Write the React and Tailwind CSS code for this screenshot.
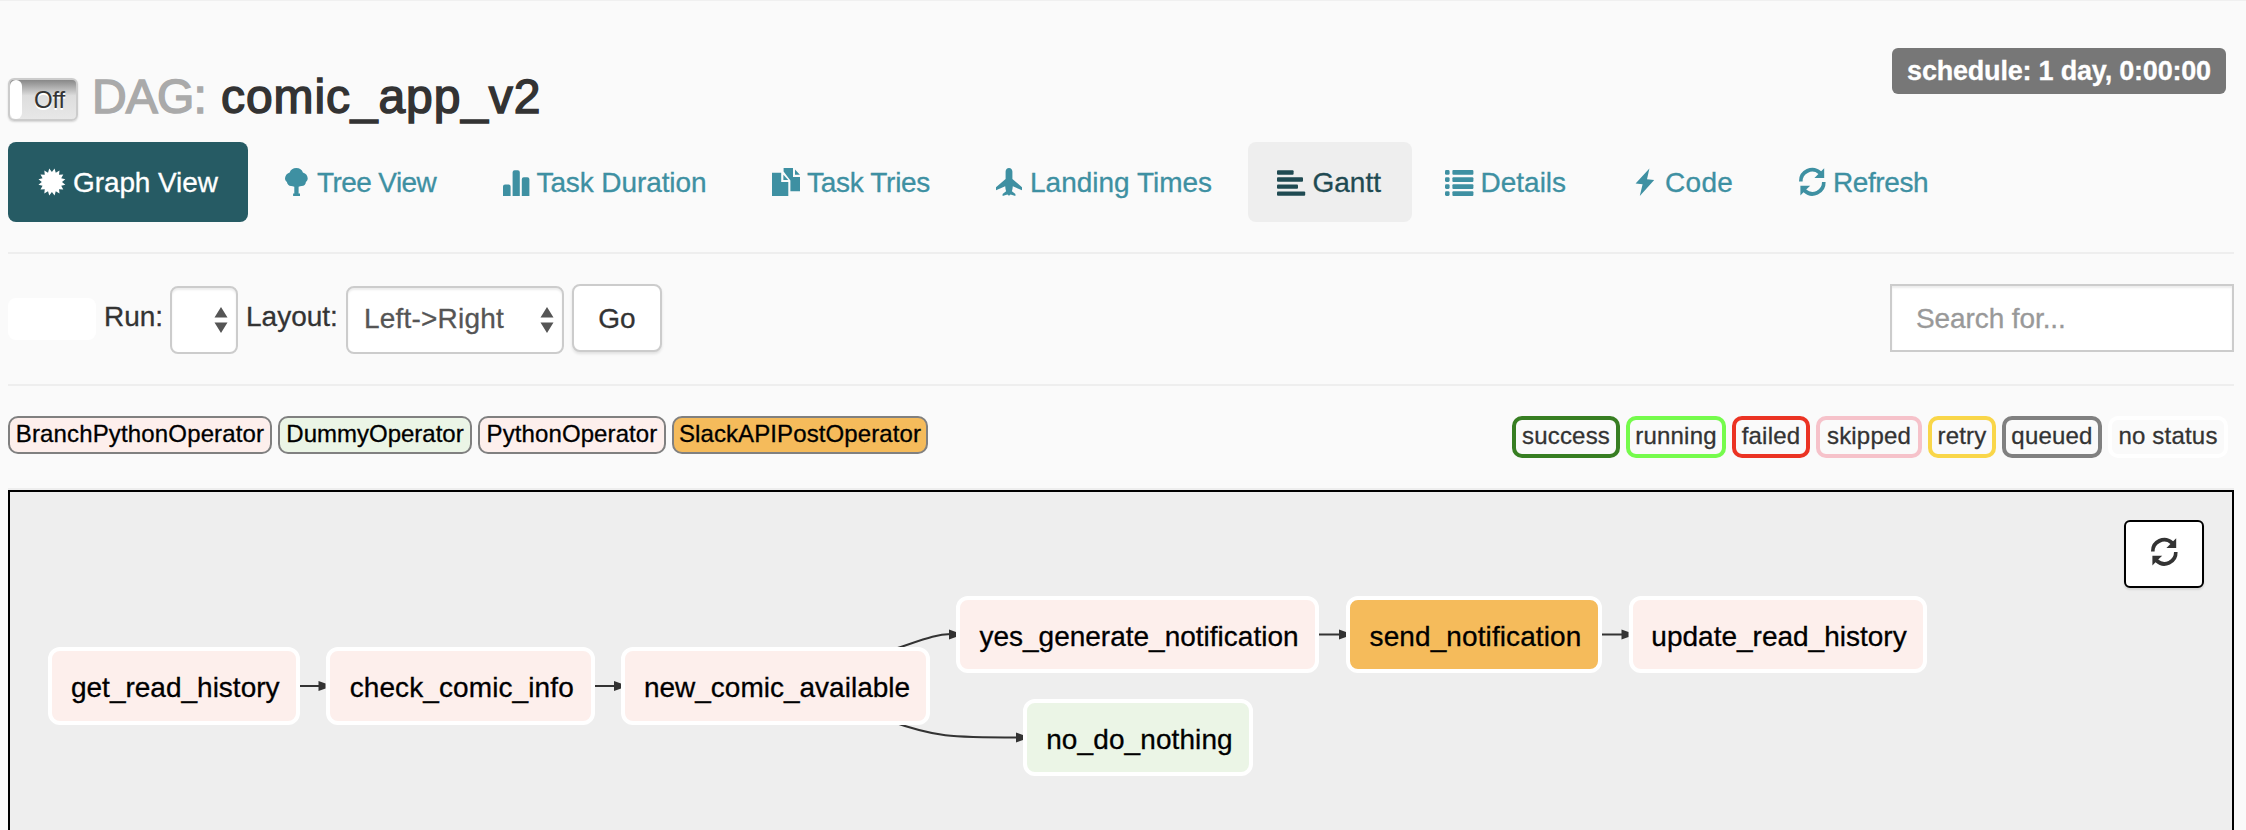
import React from "react";

/* ---------- icons (28px em box) ---------- */
function Icon({ children }) {
  return (
    <svg viewBox="0 0 28 28" className="h-7 w-7 shrink-0 overflow-visible fill-current">
      {children}
    </svg>
  );
}

const burst = Array.from({ length: 32 }, (_, i) => {
  const r = i % 2 === 0 ? 13.7 : 10.1;
  const a = ((i * 11.25 + 11.25) * Math.PI) / 180;
  return `${(13.9 + r * Math.sin(a)).toFixed(2)},${(14 - r * Math.cos(a)).toFixed(2)}`;
}).join(" ");

const CertificateIcon = () => (
  <Icon>
    <polygon points={burst} />
  </Icon>
);

const TreeIcon = () => (
  <Icon>
    <path d="M14.3 0C17.6 0 20 1.7 20.9 4.4C24 5.2 25.8 7.8 25.7 10.6C25.7 12.2 24.9 13.2 23.9 13.9C23.7 16.4 22 17.9 19.8 17.9C18.6 17.9 17.6 18.3 16.6 18.7V25.6H18V28H11.1V25.6H12.3V18.7C11.2 18.3 10.2 17.9 9 17.9C6.8 17.9 5.2 16.4 4.9 14C3.8 13.2 3 12.1 3 10.5C3 7.8 4.8 5.3 7.7 4.4C8.6 1.7 11.1 0 14.3 0Z" />
  </Icon>
);

const StatsIcon = () => (
  <Icon>
    <path d="M2 28V18.4A2 2 0 0 1 4 16.4H7.6A2 2 0 0 1 9.6 18.4V28ZM11.6 28V4.3A2 2 0 0 1 13.6 2.3H16.8A2 2 0 0 1 18.8 4.3V28ZM20.8 28V11.2A2 2 0 0 1 22.8 9.2H26.4A2 2 0 0 1 28.4 11.2V28Z" />
  </Icon>
);

const DuplicateIcon = () => (
  <Icon>
    <path d="M0 4.7H9.2V13.9H16.3V28H0Z" />
    <path d="M11.6 0H21V8.9H28V23.3H18.4V12.6L11.6 3.4Z" />
    <path d="M11.4 6.8L16.2 12H11.4Z" />
    <path d="M23 1.4L27.9 6.8H23Z" />
  </Icon>
);

const PlaneIcon = () => (
  <Icon>
    <path d="M14 0C16 0 17.4 1.6 17.4 3.6V11L27 19.3V22.3L17.8 18.2C17.7 20 17.3 21.8 16.9 23.2L20.4 26V28L15.6 26.5L14 27.8L12.4 26.5L7.6 28V26L11.1 23.2C10.7 21.8 10.3 20 10.2 18.2L1 22.3V19.3L10.6 11V3.6C10.6 1.6 12 0 14 0Z" />
  </Icon>
);

const AlignLeftIcon = () => (
  <Icon>
    <rect x="0" y="2.3" width="16.6" height="4.4" rx="1" />
    <rect x="0" y="9.3" width="26" height="4.4" rx="1" />
    <rect x="0" y="16.4" width="21" height="4.4" rx="1" />
    <rect x="0" y="23.4" width="28.2" height="4.4" rx="1" />
  </Icon>
);

const ListIcon = () => (
  <Icon>
    {[2.1, 9.2, 16.2, 23.2].map((y) => (
      <React.Fragment key={y}>
        <rect x="0" y={y} width="4.6" height="4.7" rx="1.3" />
        <rect x="7.4" y={y} width="21" height="4.7" rx="1" />
      </React.Fragment>
    ))}
  </Icon>
);

const FlashIcon = () => (
  <Icon>
    <path d="M19.4 0.4L5.6 15.6L12.6 16.3L9.8 28L24.2 12L17 11.3Z" />
  </Icon>
);

const RefreshIcon = () => (
  <Icon>
    <path d="M1 13.5A13.2 13.2 0 0 1 23.1 3.3L26.2 0.2V9.9H16.4L20.4 6A9.6 9.6 0 0 0 4.6 13.5Z" />
    <path d="M27.6 14.1A13.2 13.2 0 0 1 5.5 24.3L2.4 27.4V17.7H12.2L8.2 21.6A9.6 9.6 0 0 0 24 14.1Z" />
  </Icon>
);

/* ---------- data ---------- */
const tabs = [
  { label: "Graph View", icon: CertificateIcon, cls: "w-[240px] bg-[#265b64] text-white tracking-[-0.1px]" },
  { label: "Tree View", icon: TreeIcon, cls: "w-[215.5px] text-[#3e90a2] tracking-[-0.6px]" },
  { label: "Task Duration", icon: StatsIcon, cls: "w-[266.5px] text-[#3e90a2] tracking-[-0.1px]" },
  { label: "Task Tries", icon: DuplicateIcon, cls: "w-[219px] text-[#3e90a2] tracking-[-0.3px]" },
  { label: "Landing Times", icon: PlaneIcon, cls: "w-[278.5px] text-[#3e90a2]" },
  { label: "Gantt", icon: AlignLeftIcon, cls: "w-[164px] bg-[#eeeeee] text-[#1f4a52]" },
  { label: "Details", icon: ListIcon, cls: "w-[180.5px] text-[#3e90a2]" },
  { label: "Code", icon: FlashIcon, cls: "w-[164px] text-[#3e90a2] tracking-[0.3px]" },
  { label: "Refresh", icon: RefreshIcon, cls: "w-[195px] text-[#3e90a2] tracking-[-0.4px]" },
];

const operators = [
  ["BranchPythonOperator", "w-[264px] bg-[#fdefec] tracking-[0.15px]"],
  ["DummyOperator", "w-[194px] bg-[#ebf5e6]"],
  ["PythonOperator", "w-[188px] bg-[#fdefec] tracking-[0.1px]"],
  ["SlackAPIPostOperator", "w-[256px] bg-[#f5bb5b] tracking-[0.1px]"],
];

const statuses = [
  ["success", "w-[108px] border-[#377e22]"],
  ["running", "w-[100px] border-[#75fb4c]"],
  ["failed", "w-[78px] border-[#eb3323]"],
  ["skipped", "w-[106px] border-[#f6c2ca]"],
  ["retry", "w-[68px] border-[#f9d649]"],
  ["queued", "w-[100px] border-[#808080]"],
  ["no status", "w-[120px] border-white"],
];

const nodes = [
  ["get_read_history", "left-[38px] top-[155px] w-[251.5px] bg-[#fdefec]"],
  ["check_comic_info", "left-[315.5px] top-[155px] w-[269.5px] bg-[#fdefec] tracking-[0.1px]"],
  ["new_comic_available", "left-[611px] top-[155px] w-[309px] bg-[#fdefec]"],
  ["yes_generate_notification", "left-[946px] top-[103.5px] w-[363px] bg-[#fdefec]"],
  ["no_do_nothing", "left-[1013px] top-[206.5px] w-[230px] bg-[#ebf5e6] tracking-[0.1px]"],
  ["send_notification", "left-[1336px] top-[103.5px] w-[256px] bg-[#f5bb5b] tracking-[0.1px]"],
  ["update_read_history", "left-[1618.5px] top-[103.5px] w-[298px] bg-[#fdefec]"],
];

const arrows = [
  [289, 315.5, 194],
  [584.5, 611, 194],
  [1309, 1336, 142.5],
  [1592, 1618.5, 142.5],
];

/* ---------- pieces ---------- */
function SelectArrows() {
  return (
    <svg viewBox="0 0 14 28" className="h-7 w-3.5 shrink-0 fill-[#555555]">
      <path d="M7 1L13.5 11.5H0.5ZM7 27L13.5 16.5H0.5Z" />
    </svg>
  );
}

function Tab({ label, icon: TabIcon, cls }) {
  return (
    <a className={`flex h-20 items-center rounded-lg pl-[29.5px] ${cls}`}>
      <TabIcon />
      <span className="ml-[7.5px] whitespace-nowrap pt-px leading-10">{label}</span>
    </a>
  );
}

function Arrow({ x1, x2, y }) {
  return (
    <g>
      <path d={`M${x1} ${y}H${x2 - 5}`} stroke="#333333" strokeWidth="2" />
      <path d={`M${x2 - 7} ${y - 5}L${x2} ${y - 2.5}V${y + 2.5}L${x2 - 7} ${y + 5}Z`} fill="#333333" />
    </g>
  );
}

export default function App() {
  return (
    <div className="flex h-[830px] w-[2246px] flex-col overflow-hidden border-t border-[#f0f0f0] bg-[#fafafa] pl-2 pr-3 font-['Liberation_Sans',Arial,sans-serif] text-[28px] text-[#333333] [-webkit-text-stroke:0.3px_currentColor]">
      {/* title */}
      <header className="flex h-[141px] shrink-0 items-start justify-between pt-[47px]">
        <div className="flex items-center pt-[13px]">
          <div className="mt-[6px] flex h-[43px] w-[70px] overflow-hidden rounded-md border-2 border-[#cccccc] bg-linear-to-b from-[#888888] via-[#dddddd] via-40% to-[#e8e8e8] shadow-[0_1px_2px_rgba(0,0,0,0.15)]">
            <div className="h-full w-3 shrink-0 rounded-md bg-white" />
            <span className="ml-3 text-2xl leading-[39px] tracking-[-0.2px] [-webkit-text-stroke:0px] [text-shadow:0_2px_0_#ffffff]">Off</span>
          </div>
          <h3 className="ml-[12px] flex whitespace-pre pt-px text-[48px] leading-[70px] [-webkit-text-stroke:1.5px_currentColor]">
            <span className="w-[131px] pl-[2px] tracking-[-0.8px] text-[#aaaaaa]">DAG:</span>
            <span className="tracking-[0.9px]">comic_app_v2</span>
          </h3>
        </div>
        <span className="mr-2 flex h-[46px] w-[334px] items-center justify-center whitespace-nowrap rounded-md bg-[#777777] text-[27px] font-bold tracking-[-0.2px] text-white">
          schedule: 1 day, 0:00:00
        </span>
      </header>

      {/* tabs */}
      <nav className="flex shrink-0 gap-1">
        {tabs.map((t) => (
          <Tab key={t.label} {...t} />
        ))}
      </nav>

      <hr className="mt-[30px] shrink-0 border-t-2 border-[#eeeeee]" />

      {/* controls */}
      <div className="mt-[30px] flex h-[70px] shrink-0 items-start">
        <div className="mt-[14px] h-[42px] w-[88px] rounded-lg bg-white" />
        <label className="ml-[8px] w-[66px] leading-[66px]">Run:</label>
        <div className="mt-[2px] flex h-[68px] w-[68px] items-center justify-end rounded-lg border-2 border-[#cccccc] bg-white pr-[8px] shadow-[inset_0_2px_2px_rgba(0,0,0,0.075)]">
          <SelectArrows />
        </div>
        <label className="ml-[8px] w-[100px] leading-[66px]">Layout:</label>
        <div className="mt-[2px] flex h-[68px] w-[218px] items-center justify-between rounded-lg border-2 border-[#cccccc] bg-white pl-[16px] pr-[8px] text-[#555555] shadow-[inset_0_2px_2px_rgba(0,0,0,0.075)]">
          <span className="-mt-[3px] tracking-[0.2px]">{"Left->Right"}</span>
          <SelectArrows />
        </div>
        <button className="ml-2 h-[68px] w-[90px] rounded-lg border-2 border-[#cccccc] bg-white leading-[65px] shadow-[0_2px_3px_rgba(0,0,0,0.1)]">
          Go
        </button>
        <div className="ml-auto h-[68px] w-[344px] border-2 border-[#cccccc] bg-white pl-6 leading-[65px] tracking-[-0.1px] text-[#999999] shadow-[inset_0_2px_2px_rgba(0,0,0,0.075)]">
          Search for...
        </div>
      </div>

      <hr className="mt-[30px] shrink-0 border-t-2 border-[#eeeeee]" />

      {/* legends */}
      <div className="mt-[30px] flex h-[72px] shrink-0 items-start justify-between text-2xl">
        <div className="flex gap-1.5">
          {operators.map(([label, cls]) => (
            <span
              key={label}
              className={`flex h-[38px] justify-center whitespace-nowrap rounded-[10px] border-2 border-[#808080] leading-[31px] text-black ${cls}`}
            >
              {label}
            </span>
          ))}
        </div>
        <div className="mr-1.5 flex gap-1.5">
          {statuses.map(([label, cls]) => (
            <span
              key={label}
              className={`flex h-[42px] justify-center whitespace-nowrap rounded-[10px] border-4 leading-[32px] tracking-[0.2px] ${cls}`}
            >
              {label}
            </span>
          ))}
        </div>
      </div>

      {/* graph canvas */}
      <main className="shrink-0 border-t-2 border-[#eeeeee]">
        <div className="relative h-[400px] border-2 border-black bg-[#eeeeee]">
          <svg className="absolute left-0 top-0 h-[340px] w-[2222px]" fill="none">
            {arrows.map(([x1, x2, y]) => (
              <Arrow key={x1} x1={x1} x2={x2} y={y} />
            ))}
            <path d="M880 158.5C915 147 925 142.5 941 142" stroke="#333333" strokeWidth="2" />
            <path d="M939 137.5L946 140V145L939 147.5Z" fill="#333333" />
            <path d="M880 229C925 245 940 245.5 1008 245.5" stroke="#333333" strokeWidth="2" />
            <path d="M1006 240.5L1013 243V248L1006 250.5Z" fill="#333333" />
          </svg>
          {nodes.map(([label, cls]) => (
            <div
              key={label}
              className={`absolute flex h-[77.5px] items-center justify-center whitespace-nowrap rounded-xl border-4 border-white pl-[3px] pt-[5px] text-black ${cls}`}
            >
              {label}
            </div>
          ))}
          <button className="absolute right-[28px] top-[28px] flex h-[68px] w-[80px] items-center justify-center rounded-md border-2 border-black bg-white pb-1 shadow-[0_2px_2px_rgba(0,0,0,0.1)]">
            <RefreshIcon />
          </button>
        </div>
      </main>
    </div>
  );
}
